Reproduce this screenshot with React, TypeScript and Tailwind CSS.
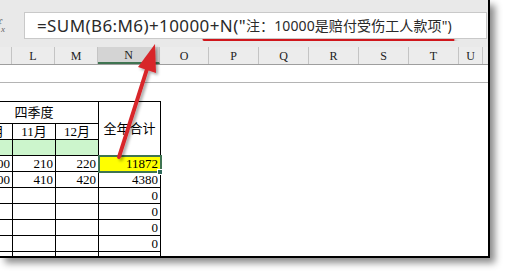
import React from 'react'

const headerCols = [
  { label: 'K', w: 'w-[12px]' },
  { label: 'L', w: 'w-[43px]' },
  { label: 'M', w: 'w-[43px]' },
  { label: 'N', w: 'w-[62px]', active: true },
  { label: 'O', w: 'w-[49px]' },
  { label: 'P', w: 'w-[50px]' },
  { label: 'Q', w: 'w-[50px]' },
  { label: 'R', w: 'w-[50px]' },
  { label: 'S', w: 'w-[50px]' },
  { label: 'T', w: 'w-[50px]' },
  { label: 'U', w: 'w-[24px]' },
]

const dataRows = [
  ['200', '210', '220', '11872'],
  ['400', '410', '420', '4380'],
  ['', '', '', '0'],
  ['', '', '', '0'],
  ['', '', '', '0'],
  ['', '', '', '0'],
  ['', '', '', '0'],
]

const serif = "font-['Liberation_Serif','Noto_Sans_CJK_SC',serif]"

export default function App() {
  return (
    <div className="relative w-[512px] h-[279px] bg-white overflow-hidden">
      <div className="w-[490px] h-[258px] border-r-2 border-b-2 border-black shadow-[5px_5px_7px_rgba(0,0,0,0.45)] overflow-hidden bg-white flex flex-col">
        {/* formula bar */}
        <div className="h-[47px] bg-[#e9e9e9] flex pt-[12px] pb-[8px] pr-[1px]">
          <div className="w-[24px] flex items-center overflow-hidden">
            <span className="-ml-[3px] italic text-[14px] text-[#666] font-['Liberation_Serif',serif]">
              f<sub className="text-[9px]">x</sub>
            </span>
          </div>
          <div className="flex-1 bg-white border border-[#c9c9c9] flex items-center pl-[12px] font-['Noto_Sans','Noto_Sans_CJK_SC',sans-serif] text-[#2a2a2a] whitespace-nowrap">
            <span className="text-[17px] tracking-[0.4px]">=SUM(B6:M6)+10000+N("</span>
            <span className="text-[14px] tracking-[0.1px]">注：10000是赔付受伤工人款项")</span>
          </div>
        </div>

        {/* column headers */}
        <div className="h-[18px] flex bg-[#ececec] border-b border-[#9e9e9e]">
          {headerCols.map((c) => (
            <div
              key={c.label}
              className={`${c.w} shrink-0 border-r border-[#c4c4c4] flex items-center justify-center overflow-hidden text-[12px] text-[#222] ${serif} ${
                c.active ? 'bg-[#d4d4d4] border-b-2 border-b-[#3f7451]' : ''
              }`}
            >
              {c.label !== 'K' && c.label}
            </div>
          ))}
          <div className="flex-1" />
        </div>

        {/* blank rows */}
        <div className="h-[18px] border-b border-[#b4b4b4] shrink-0" />
        <div className="h-[18px] shrink-0" />

        {/* data table */}
        <div className="overflow-hidden">
          <table className={`-ml-[31px] table-fixed border-collapse text-[13px] text-black ${serif}`}>
            <colgroup>
              <col className="w-[43px]" />
              <col className="w-[43px]" />
              <col className="w-[43px]" />
              <col className="w-[62px]" />
            </colgroup>
            <tbody>
              <tr className="h-[22px]">
                <td colSpan={3} className="border border-black text-center leading-none">四季度</td>
                <td rowSpan={3} className="border border-black text-center leading-none">全年合计</td>
              </tr>
              <tr className="h-[16px]">
                {['10月', '11月', '12月'].map((m) => (
                  <td key={m} className="border border-black text-center leading-none p-0">{m}</td>
                ))}
              </tr>
              <tr className="h-[16px]">
                <td className="border border-black bg-[#ccf5cc]" />
                <td className="border border-black bg-[#ccf5cc]" />
                <td className="border border-black bg-[#ccf5cc]" />
              </tr>
              {dataRows.map((r, i) => (
                <tr key={i} className="h-[16px]">
                  {r.map((v, j) => {
                    const sel = i === 0 && j === 3
                    return (
                      <td
                        key={j}
                        className={`border border-black text-right leading-none p-0 pr-[2px] ${
                          sel ? 'relative bg-[#ffff00] outline-2 outline-[#3f7451] -outline-offset-1' : ''
                        }`}
                      >
                        {v}
                        {sel && (
                          <span className="absolute -right-[3px] -bottom-[4px] w-[6px] h-[6px] bg-[#2f6a5a] border border-white" />
                        )}
                      </td>
                    )
                  })}
                </tr>
              ))}
            </tbody>
          </table>
        </div>
      </div>

      {/* annotations */}
      <svg className="absolute left-0 top-0 pointer-events-none" width="512" height="279">
        <defs>
          <filter id="sh" x="-20%" y="-20%" width="140%" height="140%">
            <feDropShadow dx="2" dy="2" stdDeviation="1.5" floodColor="#000" floodOpacity="0.35" />
          </filter>
        </defs>
        <path d="M204 39.5 Q330 41 453 40" stroke="#d0161c" strokeWidth="3" strokeLinecap="round" fill="none" filter="url(#sh)" />
        <g filter="url(#sh)">
          <line x1="119" y1="157" x2="147" y2="69" stroke="#d8262b" strokeWidth="4" strokeLinecap="round" />
          <polygon points="155,44 156,73 138,67" fill="#d8262b" />
        </g>
      </svg>
    </div>
  )
}
